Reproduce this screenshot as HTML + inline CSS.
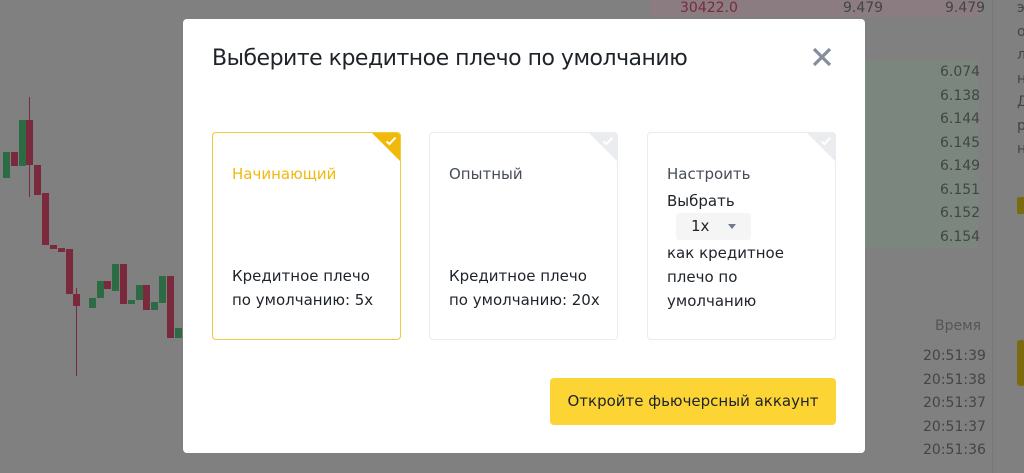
<!DOCTYPE html>
<html><head><meta charset="utf-8"><style>
*{margin:0;padding:0;box-sizing:border-box}
body{width:1024px;height:473px;overflow:hidden;background:#808080;font-family:"Liberation Sans","DejaVu Sans",sans-serif;position:relative}
.abs{position:absolute}
.c{position:absolute;width:7px}
.w{position:absolute;width:1px}
.g{background:#2d6b45}.r{background:#7a2a3c}
.ob{position:absolute;font-size:14px;color:#444;font-family:"DejaVu Sans",sans-serif}
.modal{position:absolute;left:183px;top:19px;width:682px;height:434px;background:#fff;border-radius:4px}
.title{position:absolute;left:29px;top:27px;font-size:22px;color:#1e2329;font-family:"DejaVu Sans",sans-serif;letter-spacing:-0.5px}
.x{position:absolute;left:627px;top:26px;width:24px;height:24px}
.card{position:absolute;top:113px;width:189px;height:208px;border:1px solid #eaecef;border-radius:4px;overflow:hidden}
.card.sel{border-color:#f0cb3a}
.corner{position:absolute;right:0;top:0;width:0;height:0;border-top:28px solid #eaecef;border-left:28px solid transparent}
.sel .corner{border-top-color:#f0b90b}
.chk{position:absolute;right:3px;top:3px;width:12px;height:10px}
.h{position:absolute;left:19px;top:32px;font-size:15px;color:#474d57;font-family:"DejaVu Sans",sans-serif}
.sel .h{color:#f0b90b}
.t{position:absolute;left:19px;font-size:15px;color:#1e2329;line-height:24px;font-family:"DejaVu Sans",sans-serif}
.btn{position:absolute;left:367px;top:359px;width:286px;height:47px;background:#fcd535;border-radius:4px;font-size:15px;color:#1e2329;text-align:center;line-height:47px;font-family:"DejaVu Sans",sans-serif}
</style></head><body>
<div class="abs" style="left:650px;top:0;width:330px;height:17px;background:#8a7c80"></div>
<div class="abs" style="left:865px;top:60px;width:113px;height:188px;background:#7a867e"></div>
<div class="abs" style="left:992px;top:0;width:1px;height:473px;background:#777"></div>
<div class="ob" style="left:680px;top:0;color:#7a2a3c">30422.0</div>
<div class="ob" style="left:843px;top:0">9.479</div><div class="ob" style="left:945px;top:0">9.479</div>
<div class="ob" style="left:940px;top:64px">6.074</div><div class="ob" style="left:940px;top:88px">6.138</div>
<div class="ob" style="left:940px;top:111px">6.144</div><div class="ob" style="left:940px;top:135px">6.145</div>
<div class="ob" style="left:940px;top:158px">6.149</div><div class="ob" style="left:940px;top:182px">6.151</div>
<div class="ob" style="left:940px;top:205px">6.152</div><div class="ob" style="left:940px;top:229px">6.154</div>
<div class="ob" style="left:935px;top:318px;color:#555">Время</div>
<div class="ob" style="left:923px;top:348px">20:51:39</div><div class="ob" style="left:923px;top:372px">20:51:38</div>
<div class="ob" style="left:923px;top:395px">20:51:37</div><div class="ob" style="left:923px;top:419px">20:51:37</div>
<div class="ob" style="left:923px;top:442px">20:51:36</div>
<div class="ob" style="left:1017px;top:0">э</div><div class="ob" style="left:1017px;top:24px">о</div><div class="ob" style="left:1017px;top:47px">л</div><div class="ob" style="left:1017px;top:71px">н</div><div class="ob" style="left:1017px;top:94px">Д</div><div class="ob" style="left:1017px;top:118px">р</div><div class="ob" style="left:1017px;top:141px">н</div>
<div class="abs" style="left:1017px;top:197px;width:8px;height:17px;background:#7a6a10;border-radius:2px"></div>
<div class="abs" style="left:1017px;top:340px;width:8px;height:46px;background:#7a6a10;border-radius:3px"></div>
<div class="c g" style="left:3px;top:152px;height:26px"></div>
<div class="c r" style="left:11px;top:152px;height:14px"></div>
<div class="c g" style="left:19px;top:120px;height:46px"></div>
<div class="c r" style="left:26px;top:120px;height:45px"></div><div class="w r" style="left:29px;top:97px;height:100px"></div>
<div class="c r" style="left:34px;top:165px;height:30px"></div>
<div class="c r" style="left:42px;top:193px;height:52px"></div>
<div class="c r" style="left:50px;top:245px;height:4px"></div>
<div class="c r" style="left:58px;top:248px;height:4px"></div>
<div class="c r" style="left:66px;top:249px;height:45px"></div>
<div class="c r" style="left:73px;top:294px;height:12px"></div><div class="w r" style="left:76px;top:288px;height:88px"></div>
<div class="c g" style="left:89px;top:298px;height:10px"></div>
<div class="c g" style="left:97px;top:281px;height:17px"></div>
<div class="c r" style="left:104px;top:281px;height:8px"></div>
<div class="c g" style="left:112px;top:264px;height:27px"></div>
<div class="c r" style="left:120px;top:264px;height:40px"></div>
<div class="c g" style="left:128px;top:300px;height:4px"></div>
<div class="c g" style="left:136px;top:285px;height:15px"></div>
<div class="c r" style="left:143px;top:285px;height:25px"></div>
<div class="c g" style="left:151px;top:302px;height:8px"></div>
<div class="c g" style="left:159px;top:276px;height:27px"></div>
<div class="c r" style="left:167px;top:276px;height:62px"></div>
<div class="c g" style="left:175px;top:328px;height:10px"></div>
<div class="modal">
<div class="title">Выберите кредитное плечо по умолчанию</div>
<svg class="x" viewBox="0 0 24 24"><path d="M4 4L20 20M20 4L4 20" stroke="#848e9c" stroke-width="3.2"/></svg>
<div class="card sel" style="left:29px"><div class="corner"></div><svg class="chk" viewBox="0 0 12 10"><path d="M1.5 5.5L4.5 8L10.5 1.5" stroke="#fff" stroke-width="2" fill="none"/></svg>
<div class="h">Начинающий</div><div class="t" style="top:131px">Кредитное плечо<br>по умолчанию: 5x</div></div>
<div class="card" style="left:246px"><div class="corner"></div><svg class="chk" viewBox="0 0 12 10"><path d="M1.5 5.5L4.5 8L10.5 1.5" stroke="#fff" stroke-width="2" fill="none"/></svg>
<div class="h">Опытный</div><div class="t" style="top:131px">Кредитное плечо<br>по умолчанию: 20x</div></div>
<div class="card" style="left:464px"><div class="corner"></div><svg class="chk" viewBox="0 0 12 10"><path d="M1.5 5.5L4.5 8L10.5 1.5" stroke="#fff" stroke-width="2" fill="none"/></svg>
<div class="h">Настроить</div>
<div class="t" style="top:56px">Выбрать</div>
<div class="abs" style="left:28px;top:80px;width:75px;height:27px;background:#f5f5f5;border-radius:3px;font-size:15px;color:#1e2329;line-height:27px;padding-left:15px;font-family:'DejaVu Sans',sans-serif">1x<span style="position:absolute;left:52px;top:11px;width:0;height:0;border-left:4px solid transparent;border-right:4px solid transparent;border-top:5px solid #707a8a"></span></div>
<div class="t" style="top:108px">как кредитное<br>плечо по<br>умолчанию</div></div>
<div class="btn">Откройте фьючерсный аккаунт</div>
</div>
</body></html>
